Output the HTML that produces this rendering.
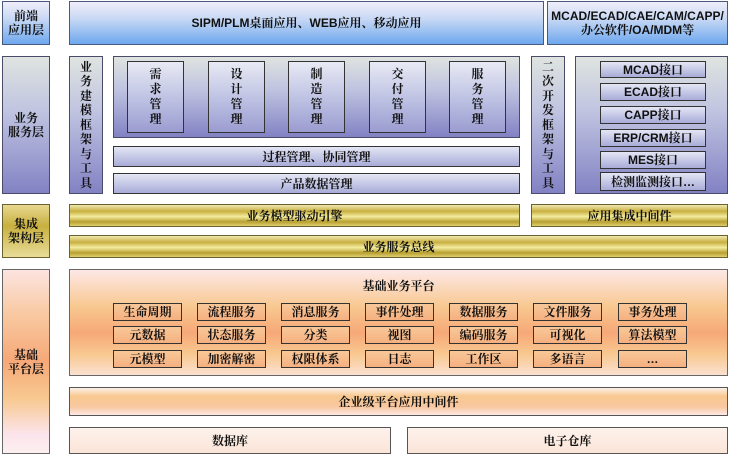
<!DOCTYPE html>
<html><head><meta charset="utf-8"><style>
body{margin:0;width:730px;height:455px;background:#fff;position:relative;overflow:hidden;font-family:"Liberation Sans","Noto Serif CJK SC",serif;font-weight:bold;color:#111}
.b{position:absolute;box-sizing:border-box;border:1px solid #555;display:flex;align-items:center;justify-content:center;text-align:center;font-size:12px;line-height:14px}
.blue{background:linear-gradient(#f0eefa,#c8d8f4 40%,#6ea8ee);border-color:#4a5a7a}
.pur{background:linear-gradient(#dfe4e0,#c0c4e0 40%,#8282c4);border-color:#4a4a6a}
.mod{background:linear-gradient(#e8eaf4,#b8bce0 60%,#9c9cd0);border-color:#333}
.btn{background:linear-gradient(#e4e6f4,#a8acd8);border-color:#333}
.gold{background:linear-gradient(#f0e8b0,#c8b040 30%,#f4eca0 55%,#b8a030 80%,#e0d070);border-color:#6a6030}
.peach{background:linear-gradient(#fde8e6,#f8c890 35%,#f6a878 60%,#f8c890 80%,#fbe0d0);border-color:#666}
.lpeach{background:linear-gradient(#fcf0e8,#f8c890 30%,#f8c8a0 70%,#fde8e4)}
.plain{background:linear-gradient(#fdf2ec,#fbe4d8)}
.cell{background:linear-gradient(#f8c898,#f6b080);border-color:#333;font-size:12px;font-weight:bold}
.v{flex-direction:column;line-height:15px}
</style></head><body>
<div class="b blue" style="left:2px;top:1px;width:48px;height:44px">前端<br>应用层</div>
<div class="b blue" style="left:69px;top:1px;width:475px;height:44px">SIPM/PLM桌面应用、WEB应用、移动应用</div>
<div class="b blue" style="left:547px;top:1px;width:181px;height:44px">MCAD/ECAD/CAE/CAM/CAPP/<br>办公软件/OA/MDM等</div>

<div class="b pur" style="left:2px;top:56px;width:48px;height:138px">业务<br>服务层</div>
<div class="b pur v" style="left:69px;top:56px;width:34px;height:138px;line-height:14.5px">业<br>务<br>建<br>模<br>框<br>架<br>与<br>工<br>具</div>
<div class="b pur" style="left:113px;top:56px;width:407px;height:82px"></div>
<div class="b mod v" style="left:127px;top:61px;width:57px;height:72px">需<br>求<br>管<br>理</div>
<div class="b mod v" style="left:208px;top:61px;width:57px;height:72px">设<br>计<br>管<br>理</div>
<div class="b mod v" style="left:288px;top:61px;width:57px;height:72px">制<br>造<br>管<br>理</div>
<div class="b mod v" style="left:369px;top:61px;width:57px;height:72px">交<br>付<br>管<br>理</div>
<div class="b mod v" style="left:449px;top:61px;width:57px;height:72px">服<br>务<br>管<br>理</div>
<div class="b btn" style="left:113px;top:146px;width:407px;height:21px">过程管理、协同管理</div>
<div class="b btn" style="left:113px;top:173px;width:407px;height:21px">产品数据管理</div>
<div class="b pur v" style="left:531px;top:56px;width:34px;height:138px;line-height:14.5px">二<br>次<br>开<br>发<br>框<br>架<br>与<br>工<br>具</div>
<div class="b pur" style="left:575px;top:56px;width:153px;height:138px"></div>
<div class="b btn" style="left:600px;top:61px;width:106px;height:17px">MCAD接口</div>
<div class="b btn" style="left:600px;top:83px;width:106px;height:18px">ECAD接口</div>
<div class="b btn" style="left:600px;top:106px;width:106px;height:18px">CAPP接口</div>
<div class="b btn" style="left:600px;top:129px;width:106px;height:18px">ERP/CRM接口</div>
<div class="b btn" style="left:600px;top:151px;width:106px;height:18px">MES接口</div>
<div class="b btn" style="left:600px;top:172px;width:106px;height:19px">检测监测接口…</div>

<div class="b gold" style="left:2px;top:204px;width:48px;height:54px;background:linear-gradient(#e8d890,#c8b040 40%,#e8dc98)">集成<br>架构层</div>
<div class="b gold" style="left:69px;top:204px;width:451px;height:23px">业务模型驱动引擎</div>
<div class="b gold" style="left:531px;top:204px;width:197px;height:23px">应用集成中间件</div>
<div class="b gold" style="left:69px;top:235px;width:659px;height:23px">业务服务总线</div>

<div class="b peach" style="left:2px;top:269px;width:48px;height:185px;background:linear-gradient(#fde4e0,#f8c8a0 25%,#f6a878 50%,#f8c890 70%,#fbe4ec 90%,#fdf0f0)">基础<br>平台层</div>
<div class="b peach" style="left:69px;top:269px;width:659px;height:107px;align-items:flex-start;padding-top:9px">基础业务平台</div>
<div class="b cell" style="left:113px;top:303px;width:69px;height:18px">生命周期</div>
<div class="b cell" style="left:197px;top:303px;width:69px;height:18px">流程服务</div>
<div class="b cell" style="left:281px;top:303px;width:69px;height:18px">消息服务</div>
<div class="b cell" style="left:365px;top:303px;width:69px;height:18px">事件处理</div>
<div class="b cell" style="left:449px;top:303px;width:69px;height:18px">数据服务</div>
<div class="b cell" style="left:533px;top:303px;width:69px;height:18px">文件服务</div>
<div class="b cell" style="left:618px;top:303px;width:69px;height:18px">事务处理</div>
<div class="b cell" style="left:113px;top:326px;width:69px;height:18px">元数据</div>
<div class="b cell" style="left:197px;top:326px;width:69px;height:18px">状态服务</div>
<div class="b cell" style="left:281px;top:326px;width:69px;height:18px">分类</div>
<div class="b cell" style="left:365px;top:326px;width:69px;height:18px">视图</div>
<div class="b cell" style="left:449px;top:326px;width:69px;height:18px">编码服务</div>
<div class="b cell" style="left:533px;top:326px;width:69px;height:18px">可视化</div>
<div class="b cell" style="left:618px;top:326px;width:69px;height:18px">算法模型</div>
<div class="b cell" style="left:113px;top:350px;width:69px;height:18px">元模型</div>
<div class="b cell" style="left:197px;top:350px;width:69px;height:18px">加密解密</div>
<div class="b cell" style="left:281px;top:350px;width:69px;height:18px">权限体系</div>
<div class="b cell" style="left:365px;top:350px;width:69px;height:18px">日志</div>
<div class="b cell" style="left:449px;top:350px;width:69px;height:18px">工作区</div>
<div class="b cell" style="left:533px;top:350px;width:69px;height:18px">多语言</div>
<div class="b cell" style="left:618px;top:350px;width:69px;height:18px">…</div>
<div class="b lpeach" style="left:69px;top:387px;width:659px;height:29px">企业级平台应用中间件</div>
<div class="b plain" style="left:69px;top:427px;width:322px;height:27px">数据库</div>
<div class="b plain" style="left:407px;top:427px;width:321px;height:27px">电子仓库</div>
</body></html>
